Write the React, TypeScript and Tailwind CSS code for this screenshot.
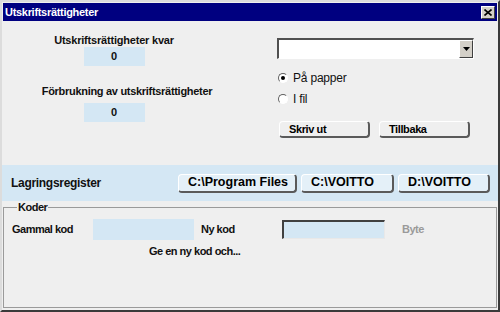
import React from "react";

const font = "font-['Liberation_Sans',Arial,sans-serif]";

// Windows-like raised button with curled corners
function Btn({ children, className = "" }: { children: React.ReactNode; className?: string }) {
  return (
    <div
      className={`flex h-[17px] items-center rounded-[4px] border-t border-l border-b-2 border-r-2 border-t-white border-l-white border-b-[#5a5a5a] border-r-[#5a5a5a] pl-[9px] font-bold leading-none text-black ${className}`}
    >
      {children}
    </div>
  );
}

function Radio({ checked, label }: { checked?: boolean; label: string }) {
  return (
    <div className="flex h-[14px] items-center gap-[5px]">
      <span className="relative flex h-[10px] w-[10px] items-center justify-center rounded-full border border-t-[#606060] border-l-[#606060] border-b-white border-r-white bg-white">
        {checked && <span className="h-[4px] w-[4px] rounded-full bg-black" />}
      </span>
      <span className="text-[12px] leading-none tracking-[-0.2px] text-[#111]">{label}</span>
    </div>
  );
}

export default function App() {
  return (
    <div
      className={`${font} flex h-[312px] w-[500px] flex-col border-t-2 border-l-2 border-b-2 border-r-2 border-t-[#dcdcdc] border-l-[#dcdcdc] border-b-[#3a3a3a] border-r-[#3a3a3a] bg-[#efefef]`}
    >
      {/* Title bar */}
      <div className="mx-[1px] mt-[1px] flex h-[18px] items-center justify-between bg-[#000080] pl-[2px] pr-[2px]">
        <span className="text-[11px] font-bold tracking-[-0.3px] text-white">Utskriftsrättigheter</span>
        <div className="flex h-[13px] w-[14px] items-center justify-center border border-t-white border-l-white border-b-[#404040] border-r-[#404040] bg-[#d4d0c8]">
          <svg width="8" height="7" viewBox="0 0 8 7">
            <path d="M0.5 0.5 L7.5 6.5 M7.5 0.5 L0.5 6.5" stroke="#000" strokeWidth="1.6" />
          </svg>
        </div>
      </div>

      {/* Upper section */}
      <div className="flex h-[144px]">
        <div className="flex w-[224px] flex-col items-center pt-[12px] tracking-[-0.2px]">
          <div className="h-[14px] text-[11px] font-bold leading-[14px] text-[#111]">Utskriftsrättigheter kvar</div>
          <div className="flex h-[19px] w-[61px] items-center justify-center bg-[#d4e7f4] text-[11px] font-bold text-[#111]">0</div>
          <div className="mt-[18px] ml-[26px] h-[14px] text-[11px] font-bold leading-[14px] tracking-[-0.3px] text-[#111]">Förbrukning av utskriftsrättigheter</div>
          <div className="mt-[5px] flex h-[19px] w-[61px] items-center justify-center bg-[#d4e7f4] text-[11px] font-bold text-[#111]">0</div>
        </div>

        <div className="ml-[51px] flex flex-col pt-[17px]">
          <div className="flex h-[21px] w-[197px] border-t-2 border-l-2 border-b border-r border-t-[#505050] border-l-[#505050] border-b-white border-r-white bg-white">
            <div className="flex-1" />
            <div className="flex w-[14px] items-center justify-center border border-t-white border-l-white border-b-[#404040] border-r-[#404040] bg-[#d4d0c8]">
              <svg width="7" height="4" viewBox="0 0 7 4">
                <path d="M0 0 H7 L3.5 4 Z" fill="#000" />
              </svg>
            </div>
          </div>
          <div className="mt-[12px] pl-[1px]">
            <Radio checked label="På papper" />
          </div>
          <div className="mt-[7px] pl-[1px]">
            <Radio label="I fil" />
          </div>
          <div className="mt-[15px] flex gap-[9px] pl-[2px]">
            <Btn className="w-[91px] bg-[#efefef] text-[11px] tracking-[-0.4px]">Skriv ut</Btn>
            <Btn className="w-[91px] bg-[#efefef] text-[11px] tracking-[-0.4px]">Tillbaka</Btn>
          </div>
        </div>
      </div>

      {/* Lagringsregister band */}
      <div className="flex h-[36px] items-center bg-[#d4e7f4] pl-[9px]">
        <span className="w-[167px] text-[12px] font-bold tracking-[-0.3px] text-[#111]">Lagringsregister</span>
        <div className="flex gap-[4px]">
          <Btn className="h-[19px] w-[119px] bg-[#e4f0f8] text-[12.5px]">C:\Program Files</Btn>
          <Btn className="h-[19px] w-[93px] bg-[#e4f0f8] text-[12.5px]">C:\VOITTO</Btn>
          <Btn className="h-[19px] w-[92px] bg-[#e4f0f8] text-[12.5px]">D:\VOITTO</Btn>
        </div>
      </div>

      {/* Koder group */}
      <fieldset className="mx-[1px] mb-[2px] flex-1 border border-[#9a9a9a] px-[8px] pt-0 tracking-[-0.5px]">
        <legend className="ml-[5px] px-[1px] text-[11px] font-bold leading-[12px] text-[#111]">Koder</legend>
        <div className="mt-[6px] flex items-center">
          <span className="w-[81px] text-[11px] font-bold text-[#111]">Gammal kod</span>
          <div className="h-[21px] w-[101px] bg-[#d4e7f4]" />
          <span className="ml-[7px] w-[81px] text-[11px] font-bold text-[#111]">Ny kod</span>
          <div className="h-[19px] w-[103px] border-t-2 border-l-2 border-b border-r border-t-[#404040] border-l-[#404040] border-b-[#e8e8e8] border-r-[#e8e8e8] bg-[#d4e7f4]" />
          <span className="ml-[17px] text-[11px] font-bold text-[#9a9a9a]">Byte</span>
        </div>
        <div className="mt-[3px] pl-[137px] text-[11px] font-bold text-[#111]">Ge en ny kod och...</div>
      </fieldset>
    </div>
  );
}
